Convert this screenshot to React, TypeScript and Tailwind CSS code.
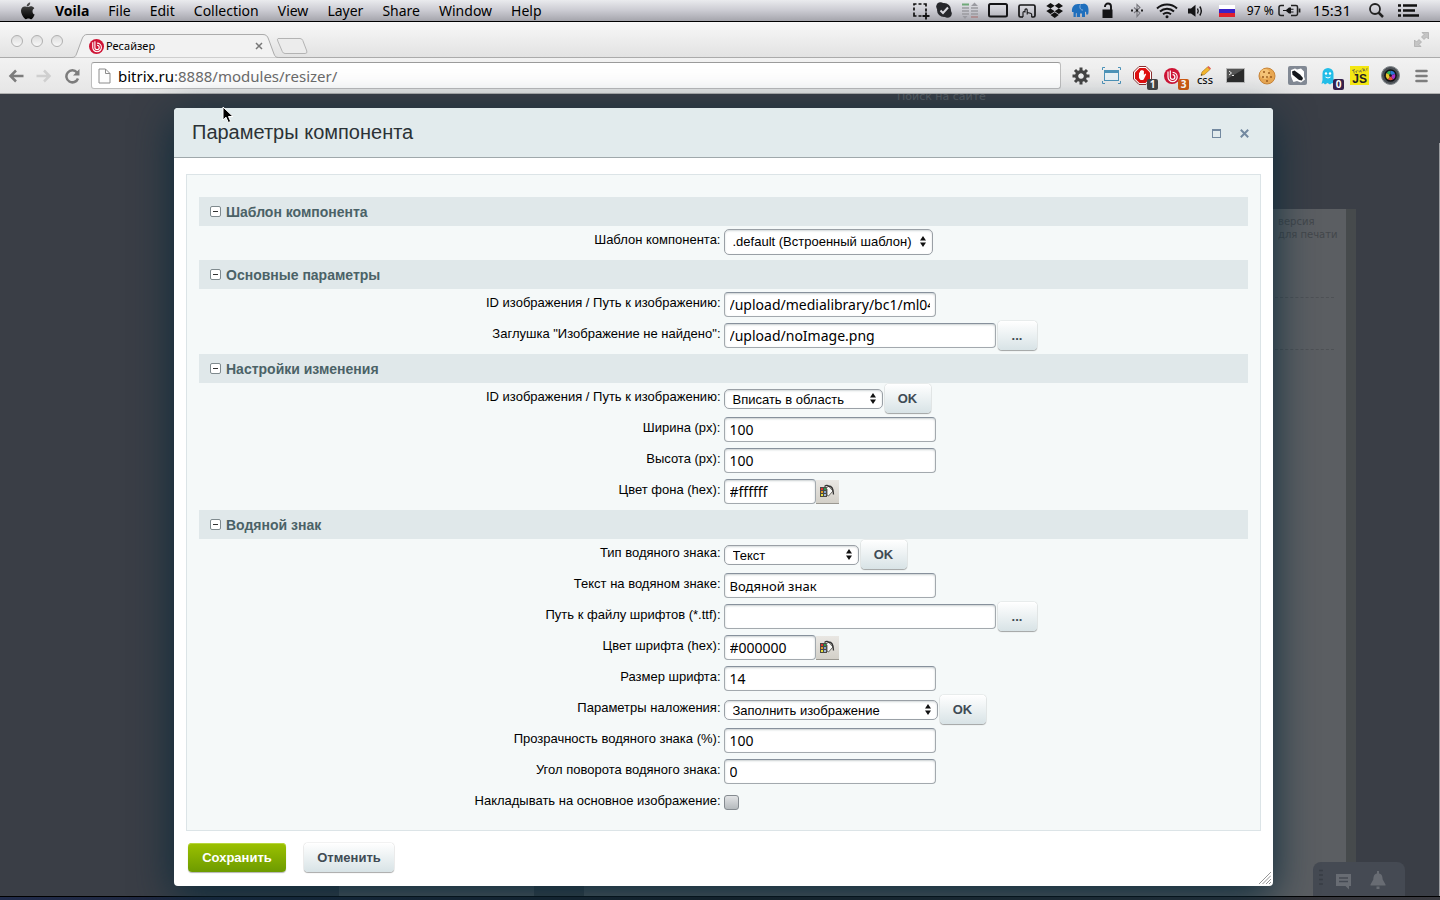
import React, { useId } from "react";

const UI_FONT = "font-['Noto_Sans',sans-serif]";

/* ---------- macOS menu bar ---------- */

const menus = ["File", "Edit", "Collection", "View", "Layer", "Share", "Window", "Help"];

function AppleLogo() {
  return (
    <svg width="15" height="18" viewBox="0 0 15 18" aria-hidden="true">
      <defs>
        <linearGradient id="apple" x1="0" y1="0" x2="0" y2="1">
          <stop offset="0" stopColor="#555" />
          <stop offset=".55" stopColor="#222" />
          <stop offset="1" stopColor="#000" />
        </linearGradient>
      </defs>
      <path fill="url(#apple)" d="M10.200.4c.1 1.200-.4 2.200-1 2.900-.7.800-1.600 1.300-2.500 1.200-.1-1.100.4-2.200 1-2.800C8.400.9 9.400.4 10.200.4zM14.300 6.300c-1.200.800-1.800 1.800-1.800 3.100 0 1.500.9 2.700 2.200 3.200-.3 1-1 2.200-1.700 3.100-.6.800-1.200 1.500-2.100 1.500-1 0-1.300-.6-2.500-.6s-1.600.6-2.500.6c-.9 0-1.600-.8-2.200-1.600C2.300 13.800 1 11 1 8.800c0-2.900 1.900-4.400 3.700-4.400 1.100 0 2 .7 2.800.7.7 0 1.800-.8 3.200-.8 1.300 0 2.700.6 3.600 2z" />
    </svg>
  );
}

function StatusIcons() {
  return (
    <div className="flex items-center" aria-hidden="true">
      <svg width="23" height="21" viewBox="0 0 23 21">
        <path d="M4 5.500V4h2.500M8.500 4h3M13.500 4H16v2.500M4 7.500v3M4 12.500V16h2.500M8.500 16h3M16 8.500v3" fill="none" stroke="#111" strokeWidth="1.700" />
        <path d="M16 12.500v7M12.500 16h7" stroke="#111" strokeWidth="1.800" />
      </svg>
      <svg width="24" height="21" viewBox="0 0 24 21">
        <circle cx="11" cy="10" r="7" fill="#26272b" />
        <circle cx="7.500" cy="6.500" r="4.300" fill="#26272b" />
        <circle cx="14.500" cy="13.500" r="4.300" fill="#26272b" />
        <path d="M7.500 10.500l2.500 2.500 5-5.500" fill="none" stroke="#d8d8de" strokeWidth="2" />
      </svg>
      <svg width="26" height="21" viewBox="0 0 26 21">
        <path d="M5 4.500h7" stroke="#6fa878" strokeWidth="2" />
        <path d="M5 8h7M5 11h7M5 14h7" stroke="#9a9aa0" strokeWidth="1.500" />
        <path d="M5.500 16h5l-2.500 3zM14 6l3.500-3.500L21 6z" fill="#9a9aa0" />
        <path d="M14 8h7M14 11h7M14 14h7" stroke="#9a9aa0" strokeWidth="1.500" />
        <path d="M14 17h7" stroke="#ad8f92" strokeWidth="2" />
      </svg>
      <svg width="30" height="21" viewBox="0 0 30 21">
        <rect x="6" y="4" width="18" height="12.500" rx="1.500" fill="none" stroke="#141416" strokeWidth="2" />
      </svg>
      <svg width="28" height="21" viewBox="0 0 28 21">
        <path d="M10 17H7.500A1.500 1.500 0 0 1 6 15.500v-9A1.500 1.500 0 0 1 7.500 5h13A1.500 1.500 0 0 1 22 6.500v9a1.500 1.500 0 0 1-1.500 1.500H18.500" fill="none" stroke="#141416" strokeWidth="1.700" />
        <path d="M10 17v-4.500a1 1 0 0 1 2 0V10a1.100 1.100 0 0 1 2.200 0v2.500l3.300.7a1.500 1.500 0 0 1 1.200 1.500V17M14.200 12.500V14.500" fill="none" stroke="#141416" strokeWidth="1.100" />
      </svg>
      <svg width="26" height="21" viewBox="0 0 26 21">
        <path fill="#111" d="M9.500 3l4.200 2.800-4.200 2.700L5.300 5.900zM17.800 3L22 5.900l-4.200 2.600-4.100-2.700zM5.300 11l4.200-2.500 4.200 2.700-4.200 2.700zM22 11l-4.200-2.500-4.100 2.700 4.100 2.700zM9.500 14.900l4.200-2.600 4.100 2.600-4.100 3.100z" />
      </svg>
      <svg width="28" height="21" viewBox="0 0 28 21">
        <path fill="#1f6fbd" d="M5 12c-.5-5 2-8 6-8 2 0 3 .2 4.500 0C19 3 21.500 5.500 21.500 9.500c0 2 .2 3-.5 5h-1.800l-.2-3-1 .8V17h-3v-3.500h-2V17h-3.200v-4l-1 .5V17H6.500v-5z" />
        <path d="M13.500 4.500c-1.500 2.500 0 6 2.500 5.500" fill="none" stroke="#a9c4e4" strokeWidth=".8" />
      </svg>
      <svg width="27" height="21" viewBox="0 0 27 21">
        <path d="M10 7V6.500a3 3 0 0 1 6 0V10" fill="none" stroke="#141416" strokeWidth="1.900" />
        <path d="M7.500 9.500h10v8.500h-10z" fill="#141416" />
      </svg>
      <svg width="28" height="21" viewBox="0 0 28 21">
        <path d="M12 7.500l6 5.500-3 3.500V4.500l3 3-6 5.500" fill="none" stroke="#77777d" strokeWidth="1.100" />
        <path d="M9 10.500h2M14 10.500h2M19 10.500h2" stroke="#222" strokeWidth="2" />
      </svg>
      <svg width="33" height="21" viewBox="0 0 33 21">
        <path d="M7 8.500c5.500-5.300 14.500-5.300 20 0M10 11.500c4-3.700 10-3.700 14 0M13 14.300c2.500-2 5.500-2 8 0" fill="none" stroke="#141416" strokeWidth="2" />
        <circle cx="17" cy="16.800" r="1.500" fill="#141416" />
      </svg>
      <svg width="28" height="21" viewBox="0 0 28 21">
        <path d="M5 8.500h3l4.500-3.700v12L8 13.500H5z" fill="#141416" />
        <path d="M14.500 8.500q1.500 2.500 0 5M16.800 6.500q3 4.500 0 9" fill="none" stroke="#141416" strokeWidth="1.400" />
      </svg>
      <svg width="30" height="21" viewBox="0 0 30 21">
        <path d="M8 5h16v4H8z" fill="#fff" />
        <path d="M8 9h16v4H8z" fill="#3a22c8" />
        <path d="M8 13h16v4H8z" fill="#e0202c" />
      </svg>
    </div>
  );
}

function MenuBar() {
  return (
    <div className={`flex h-[22px] items-center border-b border-black bg-linear-to-b from-[#eaebee] via-[#cbcbd2] to-[#a5a5ac] pr-5 pl-5 text-black ${UI_FONT}`}>
      <AppleLogo />
      <nav className="ml-5 flex grow items-center gap-[19px] text-[14px] leading-5">
        <span className="font-bold">Voila</span>
        {menus.map((m) => (
          <a key={m} href="#menu">{m}</a>
        ))}
      </nav>
      <StatusIcons />
      <span className="ml-1.5 text-[12px] leading-5 whitespace-nowrap">97 %</span>
      <svg className="ml-1" width="23" height="21" viewBox="0 0 23 21" aria-hidden="true">
        <path d="M6 5.500H3a2 2 0 0 0-2 2v6a2 2 0 0 0 2 2h3M13 5.500h5a1.500 1.500 0 0 1 1.500 1.500v7a1.500 1.500 0 0 1-1.500 1.500h-5" fill="none" stroke="#222" strokeWidth="1.500" />
        <path d="M21.500 8.500v4" stroke="#222" strokeWidth="1.800" />
        <path d="M5 10h3l3-2.500h2v1.300h2.500v1H13v1.600h2.500v1H13v1.100h-2L8 11H5z" fill="#141416" />
      </svg>
      <span className="ml-3 pb-0.5 text-[15px] leading-5">15:31</span>
      <svg className="ml-[17px]" width="17" height="21" viewBox="0 0 17 21" aria-hidden="true">
        <circle cx="7" cy="9" r="5" fill="none" stroke="#222" strokeWidth="1.800" />
        <path d="M10.500 12.500l4.500 4.500" stroke="#222" strokeWidth="2.500" />
      </svg>
      <svg className="ml-[13px]" width="22" height="21" viewBox="0 0 22 21" aria-hidden="true">
        <path d="M0 5.500h3M0 10.500h3M0 15.500h3M5 5.500h14M5 10.500h12M5 15.500h16" stroke="#111" strokeWidth="2.600" />
      </svg>
    </div>
  );
}

/* ---------- Browser chrome ---------- */

function BitrixMark({ size }: { size: number }) {
  return (
    <svg width={size} height={size} viewBox="0 0 16 16" aria-hidden="true">
      <circle cx="8" cy="8" r="8" fill="#cf1435" />
      <path d="M6.300 2.500V9a2.300 2.300 0 1 0 2.300-2.300M4 3.500V9a4.600 4.600 0 1 0 4.600-4.600" fill="none" stroke="#fff" strokeWidth="1.200" />
    </svg>
  );
}

function TabStrip() {
  return (
    <div className={`relative flex h-9 items-end bg-linear-to-b from-[#f8f8f8] to-[#e2e2e2] ${UI_FONT}`}>
      <div className="flex gap-2 self-center pt-0.5 pl-[11px]">
        {["Закрыть", "Свернуть", "Развернуть"].map((name) => (
          <button key={name} aria-label={name} className="size-3 rounded-full border border-[#b0b0b0] bg-linear-to-b from-[#dcdcdc] to-[#f8f8f8]" />
        ))}
      </div>
      <svg className="absolute bottom-0 left-0" width="320" height="24" viewBox="0 0 320 24" aria-hidden="true">
        <path d="M0 23.500H72c2.500 0 3.500-1 4.500-3.500L82 5c1.200-3 2.500-4.500 5-4.500H263c3 0 4.500 1.500 5.500 4.500l5.500 15c1 2.500 2 3.500 4.500 3.500H320V24H0z" fill="#f2f2f2" stroke="#ababab" />
        <path d="M278 4.500h22q2 0 2.800 2l4 10.500q.8 2.500-1.700 2.500h-20q-2 0-2.800-2l-4.500-10.500q-.8-2.500.2-2.500z" fill="#ececec" stroke="#b3b3b3" />
      </svg>
      <div className="absolute top-3 bottom-0 left-[89px] flex w-[178px] items-center">
        <BitrixMark size={15} />
        <span className="ml-0.5 grow text-[11px] leading-4 text-black">Ресайзер</span>
        <button aria-label="Закрыть вкладку" className="flex size-4 items-center justify-center">
          <svg width="8" height="8" viewBox="0 0 8 8" aria-hidden="true">
            <path d="M1 1l6 6M7 1L1 7" stroke="#777" strokeWidth="1.500" />
          </svg>
        </button>
      </div>
      <div className="ml-auto h-px grow self-end bg-[#ababab]" />
      <svg className="absolute top-[10px] right-[11px]" width="15" height="15" viewBox="0 0 15 15" aria-hidden="true">
        <path d="M8 .5h6.500V7L12.500 5 10 7.500 7.500 5 10 2.500zM.5 8l2 2L5 7.500 7.500 10 5 12.500l2 2H.5z" fill="#c4c4c4" stroke="#a8a8a8" strokeWidth=".7" />
      </svg>
    </div>
  );
}

function Badge({ text, color }: { text: string; color: string }) {
  return (
    <span className={`absolute right-0 -bottom-0.5 flex h-[11px] w-[11px] items-center justify-center rounded-xs text-[10px] leading-none font-bold text-white ${color}`}>{text}</span>
  );
}

function Ext({ name, children }: { name: string; children: React.ReactNode }) {
  return (
    <button aria-label={name} className="relative flex h-6 w-[31px] shrink-0 items-center justify-center">{children}</button>
  );
}

function Extensions() {
  return (
    <div className={`flex shrink-0 pl-[4px] ${UI_FONT}`}>
      <Ext name="Настройки">
        <svg width="18" height="18" viewBox="0 0 18 18">
          <circle cx="9" cy="9" r="4.300" fill="none" stroke="#444" strokeWidth="3.400" />
          <path d="M9 .5V4M9 14v3.500M.5 9H4M14 9h3.500M3 3l2.500 2.500M12.500 12.500L15 15M15 3l-2.500 2.500M5.500 12.500L3 15" stroke="#444" strokeWidth="3" />
          <circle cx="9" cy="9" r="2.500" fill="#eee" />
        </svg>
      </Ext>
      <Ext name="Размер окна">
        <svg width="19" height="17" viewBox="0 0 19 17">
          <path d="M.5 3V.5H3M16 .5h2.500V3M.5 14v2.500H3M16 16.500h2.500V14" fill="none" stroke="#4d93b8" />
          <rect x="2.500" y="3.500" width="14" height="10" fill="#e9f1f5" stroke="#4d93b8" />
          <path d="M3 5h13" stroke="#4d93b8" strokeWidth="2" />
        </svg>
      </Ext>
      <Ext name="AdBlock">
        <svg width="19" height="19" viewBox="0 0 19 19">
          <path d="M6 .5h7L18.500 6v7L13 18.500H6L.5 13V6z" fill="#fff" stroke="#8a3030" />
          <path d="M6.500 2h6L17 6.500v6L12.500 17h-6L2 12.500v-6z" fill="#e01010" />
          <path d="M6 9.500V6.500h1V9V4.800h1.300V8.500V4h1.300v4.500V4.800h1.300V9l1.300-1.500 1 .8-2 4.200-1 1.500H7.500L6 12z" fill="#fff" />
        </svg>
        <Badge text="1" color="bg-[#444444]" />
      </Ext>
      <Ext name="Битрикс">
        <span className="pr-1"><BitrixMark size={16} /></span>
        <Badge text="3" color="bg-[#cf5a12]" />
      </Ext>
      <Ext name="CSS">
        <svg width="20" height="20" viewBox="0 0 20 20">
          <path d="M6 9.500l1-3.500 5.500-5 2.500 2.500-5.500 5z" fill="#f4b62c" stroke="#a67414" strokeWidth=".6" />
          <path d="M12.500 1l1-1L16 2.500l-1 1z" fill="#e2574c" />
          <path d="M6 9.500l.5-1.500 1 1z" fill="#222" />
          <text x="10" y="18" textAnchor="middle" fontSize="11" fontWeight="500" fontFamily="Noto Sans" fill="#111">css</text>
        </svg>
      </Ext>
      <Ext name="Терминал">
        <svg width="19" height="15" viewBox="0 0 19 15">
          <rect x=".5" y=".5" width="18" height="14" fill="#2c2c2c" stroke="#b9b9b9" />
          <path d="M1 1h17L1 11z" fill="#555" />
          <path d="M3 3l2.500 2L3 7M6 7.500h2" fill="none" stroke="#fff" strokeWidth=".9" />
        </svg>
      </Ext>
      <Ext name="Cookies">
        <svg width="18" height="18" viewBox="0 0 18 18">
          <circle cx="9" cy="9" r="8" fill="#eaa953" stroke="#c98538" />
          <circle cx="7" cy="7" r="5" fill="#f5c477" />
          <g fill="#9a5b1d"><circle cx="6" cy="5" r="1" /><circle cx="11" cy="6" r="1" /><circle cx="5" cy="10" r="1" /><circle cx="9" cy="10" r=".9" /><circle cx="13" cy="10" r="1" /><circle cx="9" cy="14" r="1" /></g>
        </svg>
      </Ext>
      <Ext name="Инспектор">
        <svg width="19" height="19" viewBox="0 0 19 19">
          <rect width="19" height="19" rx="2" fill="#828994" />
          <path d="M3 4l4-1.500 2 1 4-1 3 3v5l1 3-4 3-4-1.500-3.500 1L4 13 3 10z" fill="#fff" />
          <path d="M4 5.500l2.500-1 5.500 4 3 3.500-1 2.500-3-.5-5.500-4.500-1-1z" fill="#14171c" />
        </svg>
      </Ext>
      <Ext name="Ghostery">
        <svg width="19" height="18" viewBox="0 0 19 18">
          <path d="M2.500 17l1-4V6.500a5.500 5.500 0 0 1 11 0V13l1.500 4-3-1-2 1.500L8.500 16 6 17.500 4.500 16z" fill="#22bde8" />
          <circle cx="7" cy="6.500" r="1.200" fill="#fff" /><circle cx="11" cy="6.500" r="1.200" fill="#fff" />
          <path d="M6.500 10q2.500 2 5 0" stroke="#fff" fill="none" />
        </svg>
        <Badge text="0" color="bg-[#35204c]" />
      </Ext>
      <Ext name="JS">
        <svg width="19" height="19" viewBox="0 0 19 19">
          <rect width="19" height="19" fill="#f4e712" />
          <path d="M2 4.500l3-1M3.500 4l.8 3.500M6 5l.5 1.800M6 5.500q.8-1.200 1.500-.8M9 4.500l.4 1.800M11.500 4q-1.500.2-1 1.500.5.700 1.600.2M12.800 2l.8 3.300M15 3l-1.500 1 2 1M17.500 2.300q-1.200.2-.8 1t.2 1.300" fill="none" stroke="#555" strokeWidth=".7" />
          <text x="17" y="17" textAnchor="end" fontSize="12" fontWeight="700" fontFamily="Liberation Sans" fill="#222">JS</text>
        </svg>
      </Ext>
      <Ext name="Камера">
        <svg width="19" height="19" viewBox="0 0 19 19">
          <circle cx="9.500" cy="9.500" r="9" fill="#4c5156" stroke="#80868a" />
          <circle cx="9.500" cy="9.500" r="6.300" fill="#101114" />
          <path d="M9.500 9.500L5.500 7a4.700 4.700 0 0 1 4-2.300z" fill="#2cb35a" />
          <path d="M9.500 9.500V4.700a4.700 4.700 0 0 1 4.500 3.300z" fill="#2a78d8" />
          <path d="M9.500 9.500L14 8a4.700 4.700 0 0 1-2 5.500z" fill="#a832c8" />
          <path d="M9.500 9.500l2.500 4a4.700 4.700 0 0 1-5 0z" fill="#e24a3a" />
          <path d="M9.500 9.500L7 13.500A4.700 4.700 0 0 1 5.500 7z" fill="#e8c62c" />
          <circle cx="9.500" cy="9.500" r="1.300" fill="#101114" />
        </svg>
      </Ext>
      <Ext name="Меню">
        <svg width="13" height="14" viewBox="0 0 13 14">
          <path d="M1.500 2h10M1.500 7h10M1.500 12h10" stroke="#7d7d7d" strokeWidth="2.600" strokeLinecap="round" />
        </svg>
      </Ext>
    </div>
  );
}

function Toolbar() {
  return (
    <div className="flex h-9 items-center border-b border-[#b0b0b0] bg-linear-to-b from-[#f2f2f2] to-[#e6e6e6] pr-[3px] pl-2">
      <div className="flex shrink-0 gap-3">
        <button aria-label="Назад">
          <svg width="16" height="16" viewBox="0 0 16 16"><path d="M15.500 8H3M8 2.500L2.500 8 8 13.500" fill="none" stroke="#7c7c7c" strokeWidth="2.500" /></svg>
        </button>
        <button aria-label="Вперёд">
          <svg width="16" height="16" viewBox="0 0 16 16"><path d="M.5 8H13M8 2.500L13.500 8 8 13.500" fill="none" stroke="#cfcfcf" strokeWidth="2.500" /></svg>
        </button>
        <button aria-label="Обновить">
          <svg width="16" height="16" viewBox="0 0 16 16"><path d="M13 4.500A6 6 0 1 0 14 10.500" fill="none" stroke="#7c7c7c" strokeWidth="2.500" /><path d="M15.500 1v6.500H9z" fill="#7c7c7c" /></svg>
        </button>
      </div>
      <div className="relative ml-[11px] flex h-[27px] grow items-center rounded-[3px] border border-[#bdbdbd] border-t-[#9b9b9b] bg-white pl-1.5">
        <svg width="13" height="16" viewBox="0 0 13 16" aria-hidden="true">
          <path d="M1 1h6.500L12 5.500V15H1z" fill="#fdfdfd" stroke="#8c8c8c" /><path d="M7.500 1v4.500H12" fill="none" stroke="#8c8c8c" />
        </svg>
        <a href="#address" className={`ml-[7px] text-[15px] leading-5 text-[#6b6b6b] ${UI_FONT}`}>
          <span className="text-black">bitrix.ru</span>:8888/modules/resizer/
        </a>
      </div>
      <Extensions />
    </div>
  );
}

/* ---------- Form pieces ---------- */

const FIELD =
  "h-[25px] rounded-[4px] border border-[#a3a9ae] border-t-[#87919c] bg-white px-[5px] text-black shadow-[inset_0_1px_2px_rgba(180,188,191,0.7)] outline-none font-['Noto_Sans',sans-serif]";
const BUTTON =
  "rounded-[4px] bg-linear-to-b from-white to-[#d8e3e6] text-[13px] font-bold text-[#3f4b54] shadow-[0_0_1px_rgba(0,0,0,0.5),0_1px_1px_rgba(0,0,0,0.3),inset_0_1px_0_#ffffff]";

function Section({ title, children }: { title: string; children: React.ReactNode }) {
  return (
    <section className="pb-[3px]">
      <h2 className="flex h-[29px] items-center bg-[#e0e8ea] pl-[11px] text-[14px] font-bold text-[#4b6267]">
        <button aria-label={`Свернуть: ${title}`} className="mr-[5px] flex size-[11px] items-center justify-center rounded-xs border border-[#7f8a8e] bg-white">
          <span className="h-px w-[5px] bg-[#333333]" />
        </button>
        <span className="pt-0.5">{title}</span>
      </h2>
      {children}
    </section>
  );
}

function Row({ label, children }: { label: string; children: (id: string) => React.ReactNode }) {
  const id = useId();
  return (
    <div className="grid h-[31px] grid-cols-2">
      <label htmlFor={id} className="pt-1.5 pr-[3px] text-right text-[13px] leading-4 text-black">{label}</label>
      <div className="flex items-center">{children(id)}</div>
    </div>
  );
}

type TextRowProps = { label: string; value: string; width?: string; size?: string; browse?: boolean };

function TextRow({ label, value, width = "w-[212px]", size = "text-[14px]", browse = false }: TextRowProps) {
  return (
    <Row label={label}>
      {(id) => (
        <>
          <input id={id} type="text" defaultValue={value} className={`${FIELD} ${size} ${width}`} />
          {browse && <button type="button" aria-label="Обзор" className={`ml-0.5 h-[29px] w-[39px] ${BUTTON}`}>...</button>}
        </>
      )}
    </Row>
  );
}

function SelectRow({ label, value, width, tall = false }: { label: string; value: string; width: string; tall?: boolean }) {
  return (
    <Row label={label}>
      {(id) => (
        <>
          <div className={`relative ${width}`}>
            <select id={id} className={`block w-full appearance-none rounded-[5px] border border-[#9aa0a6] bg-white pr-5 pl-2 text-[13px] text-black shadow-[inset_0_1px_2px_rgba(180,188,191,0.6)] outline-none ${tall ? "h-[26px]" : "h-5 pb-0.5"}`}>
              <option>{value}</option>
            </select>
            <svg className="pointer-events-none absolute inset-y-0 right-[7px] my-auto" width="6" height="11" viewBox="0 0 6 11" aria-hidden="true">
              <path d="M3 0l3 4.500H0zM3 11l3-4.500H0z" fill="#111" />
            </svg>
          </div>
          {!tall && <button type="button" className={`ml-0.5 h-[29px] w-[46px] ${BUTTON}`}>OK</button>}
        </>
      )}
    </Row>
  );
}

function ColorRow({ label, value }: { label: string; value: string }) {
  return (
    <Row label={label}>
      {(id) => (
        <>
          <input id={id} type="text" defaultValue={value} className={`${FIELD} w-[92px] text-[14px]`} />
          <button type="button" aria-label="Выбрать цвет" className="flex h-6 w-[23px] items-center justify-center border-b border-[#9a9891] bg-linear-to-b from-[#e9e7e3] to-[#d3d0c8]">
            <svg width="16" height="15" viewBox="0 0 16 15" aria-hidden="true">
              <path d="M1 3h7v10H1z" fill="#4b4a42" />
              <path d="M2 4h2v2H2z" fill="#d33" /><path d="M5 4h2v2H5z" fill="#2c9a4a" />
              <path d="M2 7h2v2H2z" fill="#e59a2a" /><path d="M5 7h2v2H5z" fill="#7fa3cf" />
              <path d="M2 10h2v2H2z" fill="#e9df3c" /><path d="M5 10h2v2H5z" fill="#9fb6d8" />
              <path d="M7 4.500L9.500 2 14 7l-4.500 5L8 11V5z" fill="#f6f6f4" stroke="#55544e" strokeWidth=".9" />
              <path d="M5.500 2.500Q8 .3 10 2.500M9.500 2q5 0 5 8.500" fill="none" stroke="#333" strokeWidth="1.300" />
            </svg>
          </button>
        </>
      )}
    </Row>
  );
}

function Dialog() {
  return (
    <div role="dialog" aria-labelledby="dialog-title" className="relative rounded-[4px] bg-white shadow-[0_10px_40px_#0b2a3a]">
      <header className="flex h-[50px] items-center rounded-t-[4px] border-b border-[#9fa8ab] bg-[#e2ebed] pr-6 pl-[18px]">
        <h1 id="dialog-title" className="grow pb-0.5 text-[20px] leading-6 text-[#2b3236]">Параметры компонента</h1>
        <button aria-label="Развернуть" className="mt-0.5 mr-[19px] h-[9px] w-[9px] border border-t-2 border-[#7389a0]" />
        <button aria-label="Закрыть" className="pt-0.5">
          <svg width="9" height="9" viewBox="0 0 9 9"><path d="M.8.800l7.400 7.400M8.200.800L.8 8.200" stroke="#7389a0" strokeWidth="2" /></svg>
        </button>
      </header>
      <div className="px-3 pt-4">
        <form className="border border-[#dce4e7] bg-[#f5f9f9] px-3 pt-[22px] pb-[9px]">
          <Section title="Шаблон компонента">
            <SelectRow tall label="Шаблон компонента:" value=".default (Встроенный шаблон)" width="w-[209px]" />
          </Section>
          <Section title="Основные параметры">
            <TextRow label="ID изображения / Путь к изображению:" value="/upload/medialibrary/bc1/ml04" />
            <TextRow label={'Заглушка "Изображение не найдено":'} value="/upload/noImage.png" width="w-[272px]" browse />
          </Section>
          <Section title="Настройки изменения">
            <SelectRow label="ID изображения / Путь к изображению:" value="Вписать в область" width="w-[159px]" />
            <TextRow label="Ширина (px):" value="100" />
            <TextRow label="Высота (px):" value="100" />
            <ColorRow label="Цвет фона (hex):" value="#ffffff" />
          </Section>
          <Section title="Водяной знак">
            <SelectRow label="Тип водяного знака:" value="Текст" width="w-[135px]" />
            <TextRow label="Текст на водяном знаке:" value="Водяной знак" size="text-[13px]" />
            <TextRow label="Путь к файлу шрифтов (*.ttf):" value="" width="w-[272px]" browse />
            <ColorRow label="Цвет шрифта (hex):" value="#000000" />
            <TextRow label="Размер шрифта:" value="14" />
            <SelectRow label="Параметры наложения:" value="Заполнить изображение" width="w-[214px]" />
            <TextRow label="Прозрачность водяного знака (%):" value="100" />
            <TextRow label="Угол поворота водяного знака:" value="0" />
            <Row label="Накладывать на основное изображение:">
              {(id) => (
                <input id={id} type="checkbox" className="size-[15px] appearance-none rounded-[3px] border border-[#858b90] bg-linear-to-b from-[#e2e4e6] to-[#b5babd]" />
              )}
            </Row>
          </Section>
        </form>
      </div>
      <footer className="flex gap-[18px] px-3.5 pt-3 pb-[14px]">
        <button className="h-[29px] w-[98px] rounded-[4px] bg-linear-to-b from-[#9cc100] to-[#6d9b00] text-[13px] font-bold text-white shadow-[0_1px_1px_rgba(0,0,0,0.3),inset_0_1px_0_#b8d63a]">Сохранить</button>
        <button className={`h-[29px] w-[90px] ${BUTTON}`}>Отменить</button>
      </footer>
      <svg className="absolute right-0.5 bottom-0.5" width="12" height="12" viewBox="0 0 12 12" aria-hidden="true">
        <path d="M0 12L12 0M3.500 12L12 3.500M7 12l5-5M10 12l2-2" stroke="#8a8a8a" strokeWidth=".9" />
      </svg>
    </div>
  );
}

/* ---------- Dimmed site behind the dialog ---------- */

function Backdrop() {
  return (
    <div className="absolute inset-0 overflow-hidden font-['DejaVu_Sans',sans-serif]">
      <div className="absolute top-[115px] right-[84px] bottom-0 left-[339px] border-r-[10px] border-[#464a4c] bg-[#5b5e62]">
        <div className="absolute inset-y-0 left-[195px] w-[50px] bg-[#3f444a]" />
        <p className="absolute top-1.5 right-0 w-[68px] text-[10px] leading-[13px] whitespace-nowrap text-[#43474b]">версия<br />для печати</p>
        <div className="absolute top-[88px] right-3 w-[120px] border-t border-dashed border-[#4e5155]" />
        <div className="absolute top-[140px] right-3 w-[120px] border-t border-dashed border-[#4e5155]" />
      </div>
      <span className="absolute -top-1 left-[897px] text-[11px] leading-[14px] text-[#5a5f63]">Поиск на сайте</span>
      <div className="absolute right-[35px] bottom-0 flex h-[34px] w-[92px] items-center rounded-t-lg bg-[#454a53] pl-1.5">
        <svg width="80" height="24" viewBox="0 0 80 24" aria-hidden="true">
          <path d="M0 3.500h4M0 8h4M0 12.500h4M0 17h4" stroke="#393e46" strokeWidth="1.500" />
          <path d="M17 7h15v12h-2v3.500L26.500 19H17z" fill="#686c73" />
          <path d="M20 11h9M20 14.500h9" stroke="#454a53" strokeWidth="1.500" />
          <path d="M58 4h2v2.500c3 .5 3.500 3 3.700 6l2.800 5v1H51.500v-1l2.800-5c.2-3 .7-5.500 3.700-6zM57.500 19.500h3V22h-3z" fill="#686c73" />
        </svg>
      </div>
      <div className="absolute top-[49px] right-0 bottom-0 w-px bg-[#9a9c9f]" />
    </div>
  );
}

export default function App() {
  return (
    <div className="flex min-h-screen flex-col bg-[#15171d] font-['Liberation_Sans',sans-serif]">
      <MenuBar />
      <TabStrip />
      <Toolbar />
      <main className="relative grow bg-[#3a3e46] pt-3.5 pr-[167px] pb-[10px] pl-[174px]">
        <Backdrop />
        <Dialog />
        <svg className="absolute top-3 left-[222px]" width="12" height="18" viewBox="0 0 12 18" aria-hidden="true">
          <path d="M1 1v13l3-2.800L6.300 16.500l2.400-1L6.500 10.500H11z" fill="#000" stroke="#fff" />
        </svg>
      </main>
      <div className="h-1 border-t border-black bg-linear-to-r from-[#202b4b] via-[#1b1c20] to-[#3a3a40]" />
    </div>
  );
}
